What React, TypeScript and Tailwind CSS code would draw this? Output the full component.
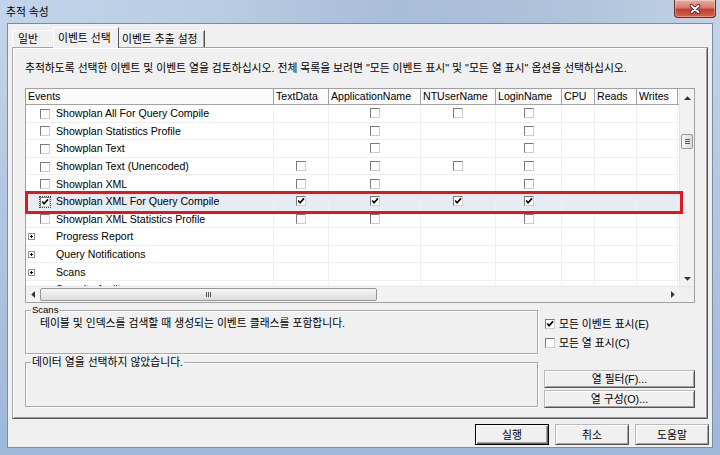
import type { ReactNode } from 'react';

// 추적 속성 dialog (SQL Server Profiler) — Win7 frame + classic controls
const FONT = "font-['Liberation_Sans','Noto_Sans_CJK_KR',sans-serif]";

type Mark = '' | 'o' | 'x';

interface GridRow {
  name: string;
  cat?: boolean;
  ev?: Mark;
  cells?: Mark[];
  sel?: boolean;
}

const COLS = [
  { label: 'Events', w: 'w-[248px]' },
  { label: 'TextData', w: 'w-[55px]' },
  { label: 'ApplicationName', w: 'w-[92px]' },
  { label: 'NTUserName', w: 'w-[75px]' },
  { label: 'LoginName', w: 'w-[66px]' },
  { label: 'CPU', w: 'w-[33px]' },
  { label: 'Reads', w: 'w-[42px]' },
  { label: 'Writes', w: 'w-[41px]' },
];

const ROWS: GridRow[] = [
  { name: 'Showplan All For Query Compile', ev: 'o', cells: ['', 'o', 'o', 'o'] },
  { name: 'Showplan Statistics Profile', ev: 'o', cells: ['', 'o', '', 'o'] },
  { name: 'Showplan Text', ev: 'o', cells: ['', 'o', '', 'o'] },
  { name: 'Showplan Text (Unencoded)', ev: 'o', cells: ['o', 'o', 'o', 'o'] },
  { name: 'Showplan XML', ev: 'o', cells: ['o', 'o', '', 'o'] },
  { name: 'Showplan XML For Query Compile', ev: 'x', cells: ['x', 'x', 'x', 'x'], sel: true },
  { name: 'Showplan XML Statistics Profile', ev: 'o', cells: ['o', 'o', '', 'o'] },
  { name: 'Progress Report', cat: true },
  { name: 'Query Notifications', cat: true },
  { name: 'Scans', cat: true },
  { name: 'Security Audit', cat: true },
];

function Box({ on, focus }: { on?: boolean; focus?: boolean }) {
  return (
    <span className="relative block h-[10px] w-[10px] shrink-0 border border-t-[#7a7a7a] border-l-[#7a7a7a] border-r-[#cdcdcd] border-b-[#cdcdcd] bg-white">
      {on && (
        <svg className="absolute left-0 top-0" width="8" height="8" viewBox="0 0 8 8">
          <path d="M1.2 3.6 L3.1 5.8 L7 1.4" fill="none" stroke="#000" strokeWidth="1.6" />
        </svg>
      )}
      {focus && <span className="absolute -inset-[2px] border border-dotted border-[#444]" />}
    </span>
  );
}

function Expander() {
  return (
    <svg width="7" height="7" viewBox="0 0 7 7" className="shrink-0">
      <rect x="0.5" y="0.5" width="6" height="6" fill="#fff" stroke="#919191" />
      <path d="M2 3.5 H5 M3.5 2 V5" stroke="#000" strokeWidth="1" />
    </svg>
  );
}

function Btn({ children, className = '', primary }: { children: ReactNode; className?: string; primary?: boolean }) {
  return (
    <div
      className={`flex items-center justify-center bg-[#f0f0f0] text-[10.8px] leading-[12px] ${
        primary
          ? 'border border-black shadow-[inset_1px_1px_0_#fff,inset_-1px_-1px_0_#696969,inset_-2px_-2px_0_#a0a0a0]'
          : 'border border-t-[#b9b9b9] border-l-[#b9b9b9] border-r-[#555] border-b-[#555] shadow-[inset_1px_1px_0_#fff,inset_-1px_-1px_0_#a0a0a0]'
      } ${className}`}
    >
      {children}
    </div>
  );
}

function GroupBox({ label, labelClass, className, children }: { label: string; labelClass: string; className: string; children?: ReactNode }) {
  return (
    <div className={`relative border border-[#a8a8a8] shadow-[inset_1px_1px_0_#fff,1px_1px_0_#fff] ${className}`}>
      <span className={`absolute left-[5px] bg-[#f0f0f0] px-[1px] ${labelClass}`}>{label}</span>
      {children}
    </div>
  );
}

function VScroll() {
  return (
    <div className="flex w-[15px] shrink-0 flex-col border-l border-[#e6e6e6] bg-[#f2f2f2]">
      <div className="flex h-[17px] items-center justify-center">
        <svg width="7" height="4" viewBox="0 0 7 4"><path d="M0 4 L3.5 0.3 L7 4 Z" fill="#333" /></svg>
      </div>
      <div className="flex-1 px-[1px] pt-[28px]">
        <div className="flex h-[15px] flex-col items-center justify-center gap-[1px] rounded-[2px] border border-[#979797] bg-[linear-gradient(90deg,#f6f6f6,#dcdcdc)]">
          <span className="h-[1px] w-[5px] bg-[#555]" />
          <span className="h-[1px] w-[5px] bg-[#555]" />
          <span className="h-[1px] w-[5px] bg-[#555]" />
        </div>
      </div>
      <div className="flex h-[14px] items-center justify-center">
        <svg width="7" height="4" viewBox="0 0 7 4"><path d="M0 0 L3.5 3.7 L7 0 Z" fill="#333" /></svg>
      </div>
    </div>
  );
}

function HScroll() {
  return (
    <div className="flex h-[16px] shrink-0 border-t border-[#e6e6e6] bg-[#f2f2f2]">
      <div className="flex w-[14px] items-center justify-center">
        <svg width="4" height="7" viewBox="0 0 4 7"><path d="M4 0 L0.3 3.5 L4 7 Z" fill="#333" /></svg>
      </div>
      <div className="my-[1px] flex w-[337px] items-center justify-center gap-[1px] rounded-[2px] border border-[#979797] bg-[linear-gradient(180deg,#f6f6f6,#dcdcdc)]">
        <span className="h-[5px] w-[1px] bg-[#555]" />
        <span className="h-[5px] w-[1px] bg-[#555]" />
        <span className="h-[5px] w-[1px] bg-[#555]" />
      </div>
      <div className="flex-1" />
      <div className="flex w-[12px] items-center justify-center">
        <svg width="4" height="7" viewBox="0 0 4 7"><path d="M0 0 L3.7 3.5 L0 7 Z" fill="#333" /></svg>
      </div>
      <div className="w-[15px] bg-[#f0f0f0]" />
    </div>
  );
}

function EventGrid() {
  return (
    <div className="relative mt-[13px] flex h-[215px] w-[670px] shrink-0 flex-col border border-[#a0a0a0] bg-white">
      <div className="flex h-[197px] shrink-0">
        <div className="flex w-[653px] flex-col overflow-hidden">
          <div className="flex h-[16px] shrink-0 bg-[#fbfbfb]">
            {COLS.map((c) => (
              <div key={c.label} className={`${c.w} shrink-0 border-r border-b border-[#a3a3a3] pl-[2px] text-[10.6px] leading-[15px]`}>
                {c.label}
              </div>
            ))}
            <div className="flex-1 border-b border-[#a3a3a3]" />
          </div>
          {ROWS.map((r) => (
            <div key={r.name} className={`flex h-[17.6px] shrink-0 ${r.sel ? 'bg-[#e6ecf3]' : 'bg-white'}`}>
              <div className="flex w-[248px] shrink-0 items-center border-r border-b border-[#efefef] pt-[1px] text-[10.6px] leading-[13px]">
                {r.cat ? (
                  <>
                    <span className="ml-[2px]"><Expander /></span>
                    <span className="ml-[21px] whitespace-nowrap">{r.name}</span>
                  </>
                ) : (
                  <>
                    <span className="ml-[14px]"><Box on={r.ev === 'x'} focus={r.sel} /></span>
                    <span className="ml-[6px] whitespace-nowrap">{r.name}</span>
                  </>
                )}
              </div>
              {COLS.slice(1).map((c, i) => {
                const m = r.cells?.[i] ?? '';
                return (
                  <div key={c.label} className={`${c.w} flex shrink-0 items-center justify-center border-r border-b border-[#efefef]`}>
                    {m && <Box on={m === 'x'} />}
                  </div>
                );
              })}
              <div className="flex-1 border-b border-[#efefef]" />
            </div>
          ))}
        </div>
        <VScroll />
      </div>
      <HScroll />
      {/* highlight annotation */}
      <div className="absolute left-[-1px] top-[102px] h-[23px] w-[658px] border-[3px] border-[#e3161f]" />
    </div>
  );
}

export default function App() {
  return (
    <div className={`${FONT} relative flex h-[455px] w-[720px] flex-col overflow-hidden bg-[linear-gradient(180deg,#c3d5ea_0%,#b2c7e0_45%,#9db8d9_100%)] text-black`}>
      <div className="flex h-[23px] shrink-0 items-center bg-[linear-gradient(90deg,#c1d4ea_0%,#b8cce3_30%,#a8bdd6_55%,#afc3db_80%,#c3d3e5_100%)] pl-[6px] text-[10.8px] leading-[12px]">
        추적 속성
      </div>
      <div className="absolute right-[4px] top-0 flex h-[18px] w-[42px] items-center justify-center rounded-b-[4px] border border-t-0 border-[#5e2a2a] bg-[linear-gradient(180deg,#e9ada2_0%,#d87a6c_45%,#c0412f_55%,#d2634d_100%)] shadow-[inset_0_0_0_1px_rgba(255,255,255,0.35)]">
        <svg width="14" height="10" viewBox="0 0 14 10">
          <path d="M3.5 1.8 L10.5 8.2 M10.5 1.8 L3.5 8.2" stroke="#4a1c1c" strokeWidth="3.6" strokeLinecap="round" />
          <path d="M3.5 1.8 L10.5 8.2 M10.5 1.8 L3.5 8.2" stroke="#fff" strokeWidth="2" strokeLinecap="round" />
        </svg>
      </div>

      <div className="flex min-h-0 flex-1 px-[7px] pb-[7px]">
        <div className="flex flex-1 flex-col border border-[#7b8ca4] bg-[#f0f0f0]">
          {/* tabs */}
          <div className="ml-[4px] mt-[3px] flex h-[21px] items-end text-[10.8px] leading-[14px]">
            <div className="h-[18px] w-[41px] border-l border-t border-white pl-[5px] pt-[1px]">일반</div>
            <div className="relative z-10 h-[21px] w-[66px] border-l border-t border-r border-l-white border-t-white border-r-[#555] bg-[#f0f0f0] pl-[4px] pt-[3px]">
              이벤트 선택
            </div>
            <div className="h-[18px] w-[86px] border-t border-r border-t-white border-r-[#555] pl-[3px] pt-[1px] shadow-[inset_-1px_0_0_#a0a0a0]">
              이벤트 추출 설정
            </div>
          </div>

          {/* tab page */}
          <div className="-mt-[1px] ml-[4px] flex h-[372px] w-[696px] flex-col border border-t-[#a5a5a5] border-l-[#a5a5a5] border-r-[#555] border-b-[#555] px-[12px] pt-[13px] shadow-[inset_1px_1px_0_#fff,inset_-1px_-1px_0_#a0a0a0]">
            <p className="whitespace-nowrap text-[10.8px] leading-[14px]">
              추적하도록 선택한 이벤트 및 이벤트 열을 검토하십시오. 전체 목록을 보려면 "모든 이벤트 표시" 및 "모든 열 표시" 옵션을 선택하십시오.
            </p>
            <EventGrid />

            <div className="mt-[7px] flex">
              <div className="flex w-[513px] flex-col gap-[8px]">
                <GroupBox label="Scans" labelClass="-top-[7px] text-[9.5px] leading-[12px]" className="h-[44px]">
                  <p className="whitespace-nowrap pl-[14px] pt-[5px] text-[10.8px] leading-[14px]">
                    테이블 및 인덱스를 검색할 때 생성되는 이벤트 클래스를 포함합니다.
                  </p>
                </GroupBox>
                <GroupBox label="데이터 열을 선택하지 않았습니다." labelClass="-top-[8px] text-[10.8px] leading-[14px]" className="h-[45px]" />
              </div>
              <div className="ml-[6px] flex w-[151px] flex-col text-[10.8px] leading-[14px]">
                <div className="mt-[4px] flex h-[19px] items-center pl-[1px]">
                  <Box on />
                  <span className="ml-[4px]">모든 이벤트 표시(E)</span>
                </div>
                <div className="flex h-[19px] items-center pl-[1px]">
                  <Box />
                  <span className="ml-[4px]">모든 열 표시(C)</span>
                </div>
                <div className="mt-[18px] flex flex-col gap-[2px]">
                  <Btn className="h-[18px]">열 필터(F)...</Btn>
                  <Btn className="h-[18px]">열 구성(O)...</Btn>
                </div>
              </div>
            </div>
          </div>

          {/* dialog buttons */}
          <div className="mt-[5px] flex justify-end gap-[6px] pr-[3px]">
            <Btn primary className="h-[21px] w-[74px]">실행</Btn>
            <Btn className="h-[21px] w-[74px]">취소</Btn>
            <Btn className="h-[21px] w-[74px]">도움말</Btn>
          </div>
        </div>
      </div>
    </div>
  );
}
